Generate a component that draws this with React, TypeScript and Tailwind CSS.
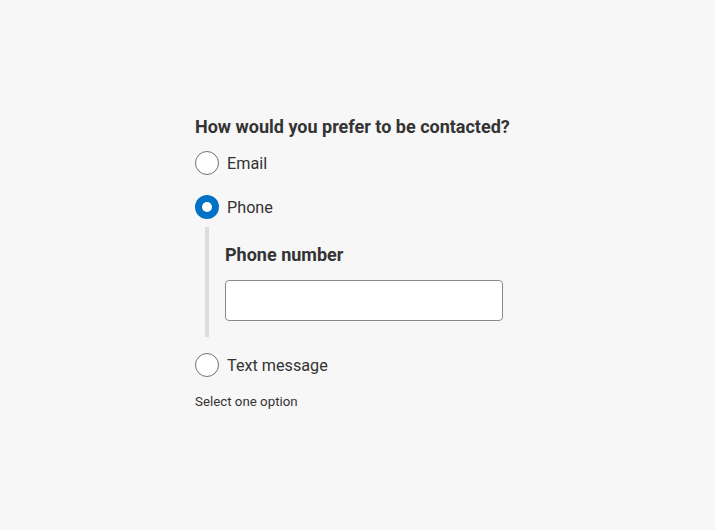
import { useState } from "react";

const options = [
  { id: "email", label: "Email" },
  { id: "phone", label: "Phone" },
  { id: "text", label: "Text message" },
];

function Radio({ checked }: { checked: boolean }) {
  if (checked) {
    return (
      <span className="flex h-6 w-6 shrink-0 items-center justify-center rounded-full bg-[#0072c6]">
        <span className="h-[10px] w-[10px] rounded-full bg-white" />
      </span>
    );
  }
  return <span className="h-6 w-6 shrink-0 rounded-full border border-[#6f6f6f] bg-white" />;
}

export default function App() {
  const [choice, setChoice] = useState("phone");
  const [phone, setPhone] = useState("");

  return (
    <div className="min-h-[530px] w-full bg-[#f7f7f7] pl-[195px] pt-[115px] text-[#333333] font-['Roboto',sans-serif]">
      <fieldset className="flex flex-col">
        <legend className="text-[18px] font-bold leading-6">How would you prefer to be contacted?</legend>
        <div className="mt-[12px] flex flex-col">
          {options.map((o, i) => (
            <div key={o.id} className={i === 0 ? "" : i === 1 ? "mt-5" : "mt-4"}>
              <label className="flex h-6 cursor-pointer items-center gap-2" onClick={() => setChoice(o.id)}>
                <Radio checked={choice === o.id} />
                <span className="pt-[2px] text-[16.2px] leading-6">{o.label}</span>
              </label>
              {o.id === "phone" && choice === "phone" && (
                <div className="ml-[10px] mt-2 border-l-4 border-[#dcdcdc] pb-4 pl-4 pt-4">
                  <label className="block text-[18px] font-bold leading-6">Phone number</label>
                  <input
                    type="tel"
                    value={phone}
                    onChange={(e) => setPhone(e.target.value)}
                    className="mt-[13px] block h-[41px] w-[278px] rounded border border-[#8a8a8a] bg-white px-3 text-[16px] outline-none"
                  />
                </div>
              )}
            </div>
          ))}
        </div>
        <p className="mt-4 text-[13.3px] leading-[18px]">Select one option</p>
      </fieldset>
    </div>
  );
}
